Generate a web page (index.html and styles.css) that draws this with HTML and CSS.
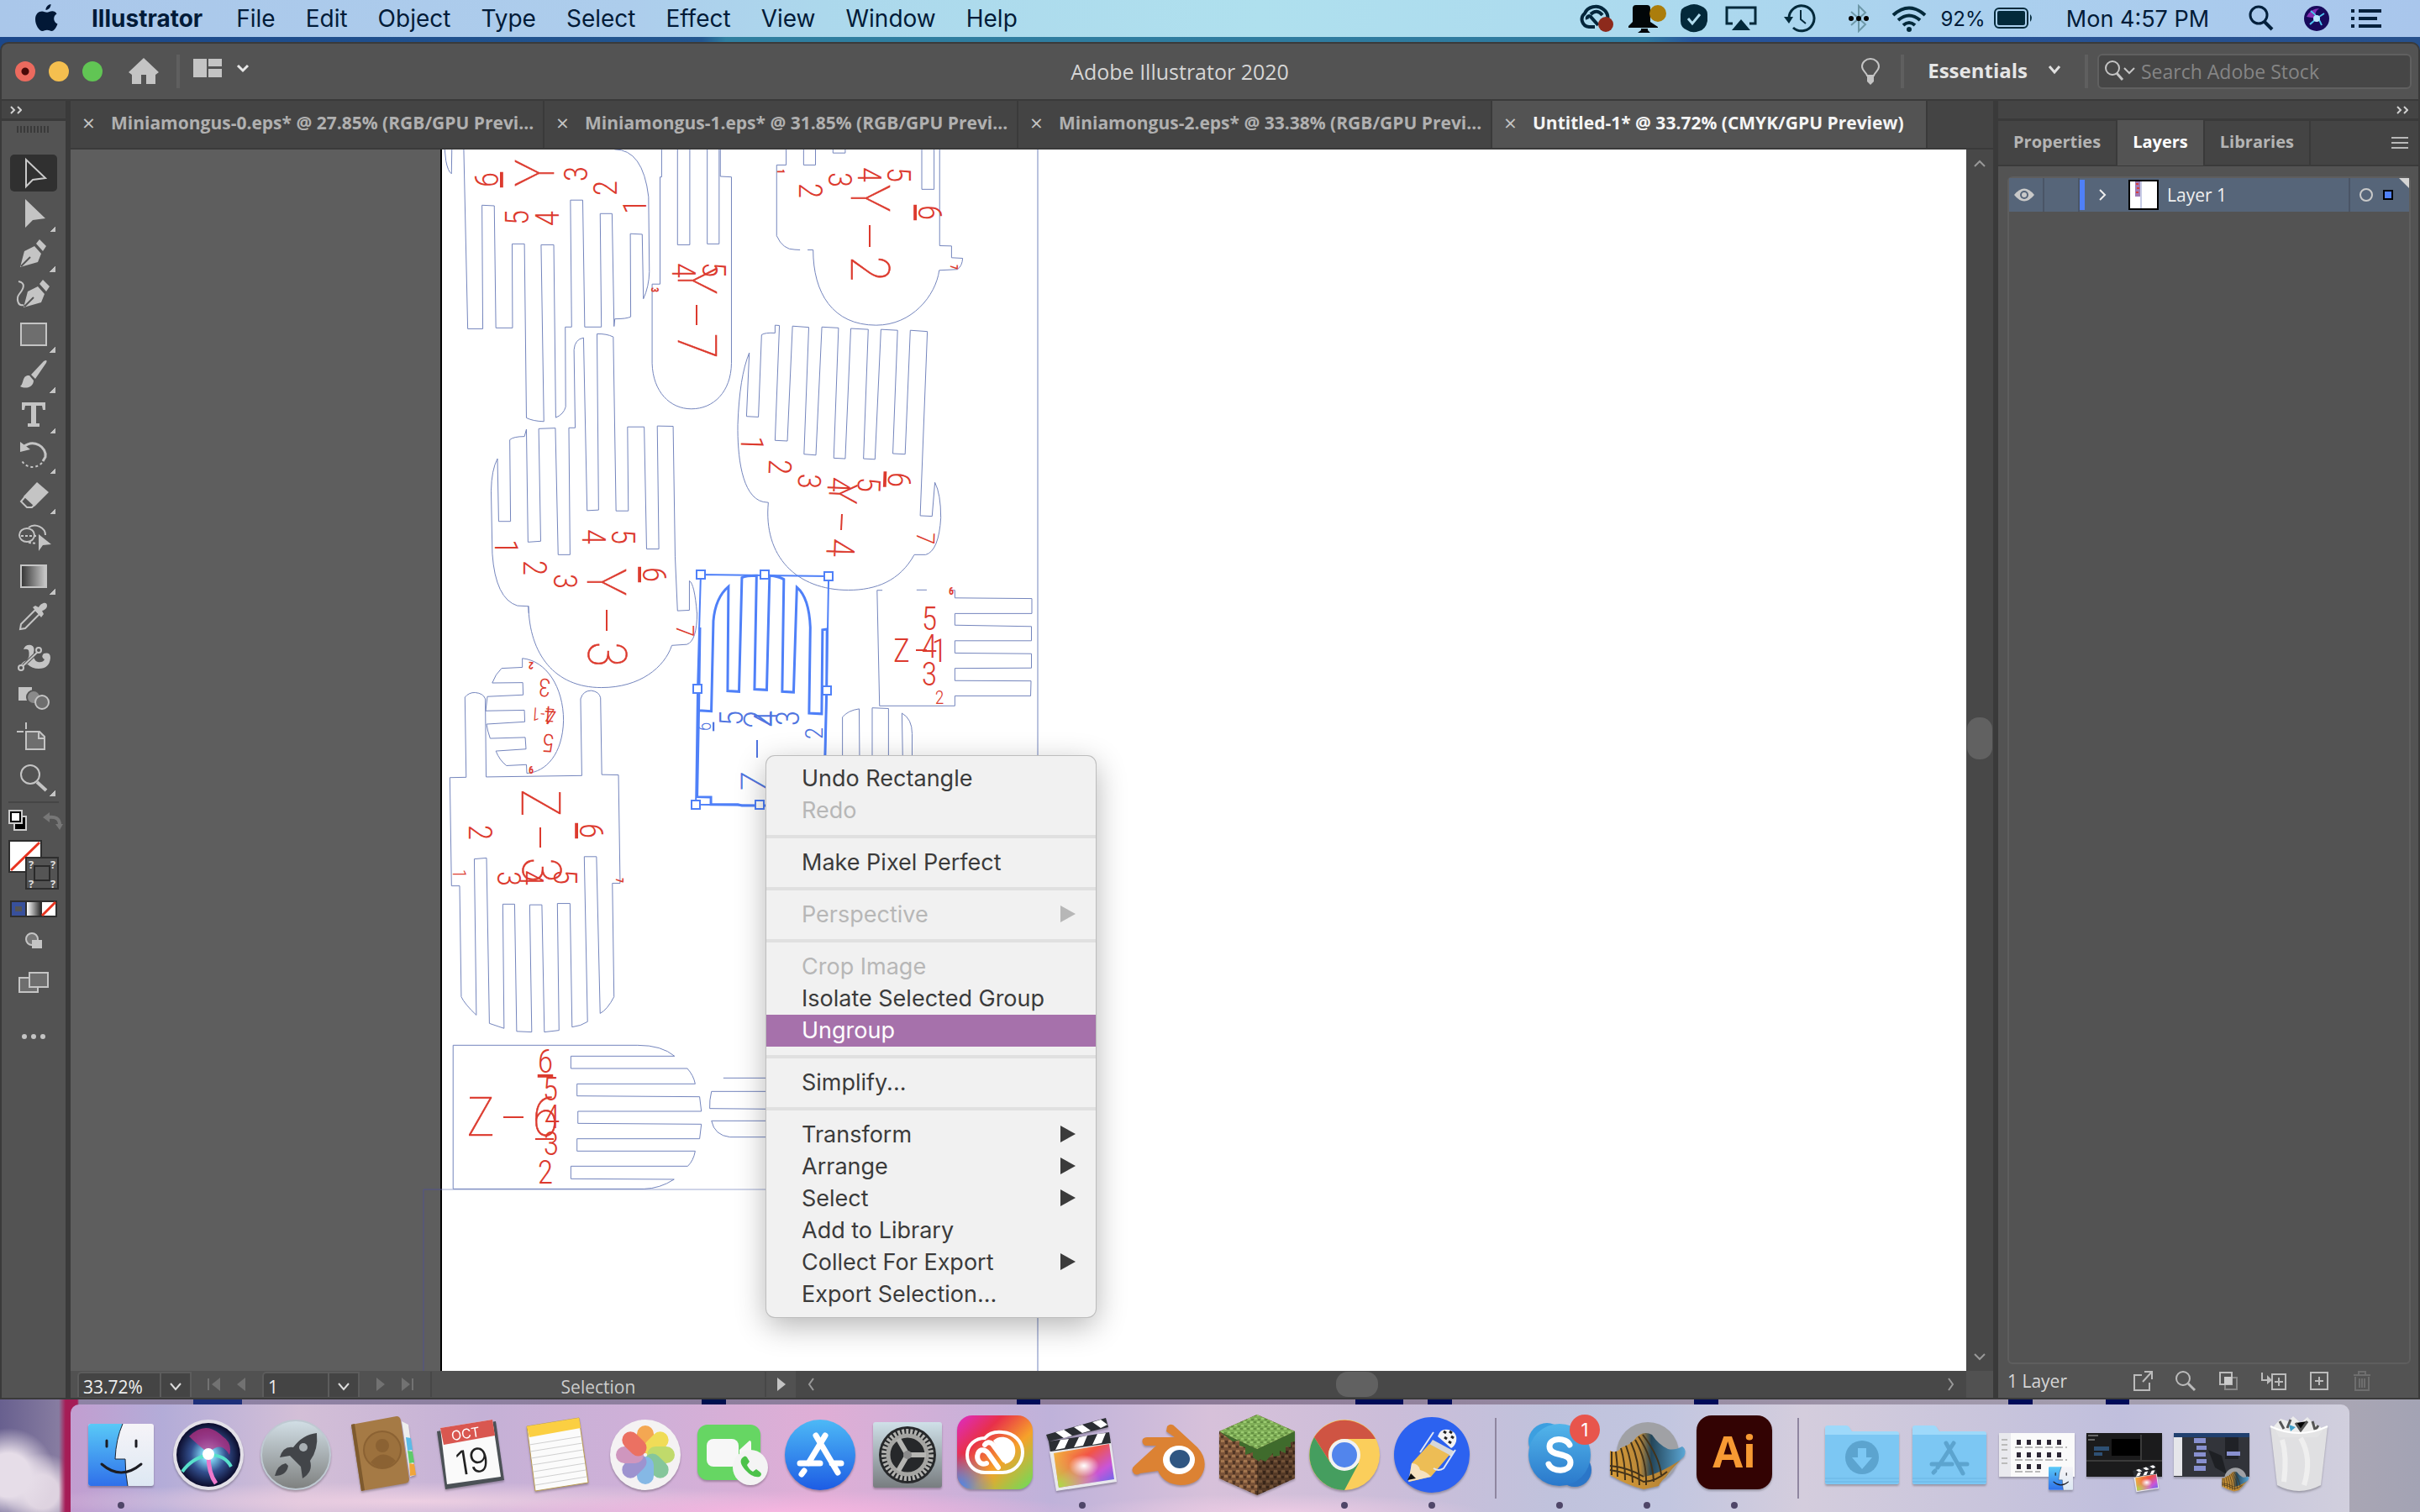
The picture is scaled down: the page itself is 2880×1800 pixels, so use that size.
FILE: index.html
```html
<!DOCTYPE html>
<html lang="en">
<head>
<meta charset="utf-8">
<title>Adobe Illustrator 2020</title>
<link rel="stylesheet" href="styles.css">
</head>
<body>
<header class="menubar">
  <nav class="menus">
    <svg class="apple" width="28" height="34" viewBox="0 0 28 34"><path d="M19.500 0c.3 3-2.500 7-6 7-.4-3 2.600-6.600 6-7zM26.500 11.500c-5 3-4 10 1 12-1.500 4-4 8.500-7 8.500-2 0-3-1.200-5.500-1.200S11.500 32 9.500 32C5.500 32 1 24.500 1 18S5 8.500 9 8.500c2.500 0 4 1.300 6 1.300 1.800 0 3.500-1.600 6.500-1.500 2 .1 3.800 1 5 3.200z" fill="#021836"/></svg>
    <button class="appname">Illustrator</button><button>File</button><button>Edit</button><button>Object</button><button>Type</button><button>Select</button><button>Effect</button><button>View</button><button>Window</button><button>Help</button>
  </nav>
  <div class="status">
    <svg width="44" height="34" viewBox="0 0 44 34"><g fill="none" stroke="#03263b" stroke-width="4"><path d="M20 27H13a9 9 0 0 1-5-16C11 3 23 0 30 6c6 4 7 12 3 17"/><path d="M24 25l-9-10c-2-2-5 0-4 3M15 12c5-5 10-4 14 1"/></g><circle cx="33" cy="24" r="9" fill="#8d2a1c"/></svg>
    <svg width="48" height="36" viewBox="0 0 48 36"><path d="M2 29V27l5-5V6q0-4 4-4h13q4 0 4 4v16l9 6v1zM17 30h8v2l3 3H13l4-3z" fill="#010608"/><circle cx="37" cy="12" r="10" fill="#ab7d0c"/></svg>
    <svg width="32" height="34" viewBox="0 0 32 34"><path d="M8 2q8-4 16 0 8 3 8 10v8q-2 10-10 12-8 3-14-1Q0 28 0 20v-8Q0 4 8 2z" fill="#03293a"/><path d="M9 17l5 6 9-11" fill="none" stroke="#b0dcee" stroke-width="3"/></svg>
    <svg width="38" height="32" viewBox="0 0 38 32"><path d="M9 22H2V3h34v19h-7" fill="none" stroke="#03293a" stroke-width="3"/><path d="M19 17l11 13H8z" fill="#03293a"/></svg>
    <svg width="40" height="34" viewBox="0 0 40 34"><path d="M7 17A15 15 0 1 1 12 28" fill="none" stroke="#03293a" stroke-width="3"/><path d="M1 15h11l-5 8z" fill="#03293a"/><path d="M21 7v11l6 5" fill="none" stroke="#03293a" stroke-width="2"/></svg>
    <svg width="26" height="34" viewBox="0 0 26 34"><path d="M4 9l17 15-8 8V2l8 8L4 25" fill="none" stroke="#6d98a8" stroke-width="2"/><circle cx="4" cy="17" r="3"/><circle cx="13" cy="17" r="3"/><circle cx="22" cy="17" r="3"/></svg>
    <svg width="42" height="32" viewBox="0 0 42 32"><g fill="none" stroke="#03293a" stroke-width="4"><path d="M2 12q19-17 38 0"/><path d="M8 18q13-11 26 0"/><path d="M14 24q7-6 14 0"/></g><circle cx="21" cy="29" r="3" fill="#03293a"/></svg>
    <span class="pct">92%</span>
    <svg width="48" height="28" viewBox="0 0 48 28"><rect x="2" y="2" width="39" height="23" rx="5" fill="none" stroke="#03293a" stroke-width="2"/><rect x="5" y="5" width="33" height="17" rx="2" fill="#03293a"/><path d="M44 9q4 4 0 9z" fill="#03293a"/></svg>
    <time>Mon 4:57 PM</time>
    <svg width="32" height="32" viewBox="0 0 32 32"><circle cx="13" cy="12" r="10" fill="none" stroke="#03203c" stroke-width="3"/><path d="M20 20l9 9" stroke="#03203c" stroke-width="4"/></svg>
    <svg width="32" height="32" viewBox="0 0 32 32"><circle cx="16" cy="16" r="15" fill="#180a5c"/><path d="M4 14Q9 4 19 4 12 9 16 16z" fill="#8531b5"/><path d="M9 7Q18 14 22 24M25 10Q16 15 8 23" stroke="#4cc4f0" stroke-width="2"/><circle cx="16" cy="16" r="4" fill="#b9e4ff"/></svg>
    <svg width="36" height="24" viewBox="0 0 36 24"><path d="M0 3h4m5 0h27M0 12h4m5 0h22M0 21h4m5 0h27" stroke="#03203c" stroke-width="4"/></svg>
  </div>
</header>

<main class="window">
  <div class="titlebar">
    <div class="tleft">
      <button class="light red" aria-label="Close"></button><button class="light yellow" aria-label="Minimize"></button><button class="light green" aria-label="Zoom"></button>
      <button class="home" aria-label="Home"><svg width="36" height="32" viewBox="0 0 36 32"><path d="M18 0l18 17-4 3v11H21V20h-6v11H4V20l-4-3z" fill="#c4c4c4"/></svg></button>
      <i class="vsep"></i>
      <button class="arr" aria-label="Arrange documents"><svg width="68" height="24" viewBox="0 0 68 24"><path d="M0 1h16v22H0zM18 1h16v9H18zM18 13h16v10H18z" fill="#c4c4c4"/><path d="M53 9l6 6 6-6" fill="none" stroke="#e8e8e8" stroke-width="3"/></svg></button>
    </div>
    <h1>Adobe Illustrator 2020</h1>
    <div class="tright">
      <svg width="24" height="34" viewBox="0 0 24 34"><path d="M8 22C7 18 2 16 2 11a10 9 0 0 1 20 0c0 5-5 7-6 11z" fill="none" stroke="#c4c4c4" stroke-width="2"/><path d="M8 23h8v6l-4 4-4-4z" fill="#c4c4c4"/></svg>
      <i class="vsep s1"></i>
      <button class="ess">Essentials<svg width="16" height="12" viewBox="0 0 16 12"><path d="M2 2l6 7 6-7" fill="none" stroke="#e0e0e0" stroke-width="3"/></svg></button>
      <i class="vsep s2"></i>
      <label class="search"><svg width="38" height="26" viewBox="0 0 38 26"><circle cx="10" cy="9" r="8" fill="none" stroke="#c4c4c4" stroke-width="2"/><path d="M15 15l7 8" stroke="#c4c4c4" stroke-width="3"/><path d="M24 9l6 6 6-6" fill="none" stroke="#c4c4c4" stroke-width="2"/></svg><input type="text" placeholder="Search Adobe Stock" aria-label="Search Adobe Stock"></label>
    </div>
  </div>
  <div class="work">
    <aside class="tools">
      <div class="phead"><svg width="14" height="10" viewBox="0 0 14 10"><path d="M1 1l4 4-4 4M9 1l4 4-4 4" fill="none" stroke="#d0d0d0" stroke-width="2"/></svg></div>
      <div class="grip"></div>
      <div class="toollist">
        <button class="on" aria-label="Selection"><svg viewBox="0 0 56 48"><path d="M19 8v32l8-8 15-2z" fill="none" stroke="#c9c9c9" stroke-width="2"/></svg></button>
        <button class="more" aria-label="Direct Selection"><svg viewBox="0 0 56 48"><path d="M18 7v34l9-9 15-2z" fill="#c4c4c4"/></svg></button>
        <button class="more" aria-label="Pen"><svg viewBox="0 0 56 48"><path d="M12 40l5-19 12-6 8 9-4 10zM31 12l4-5 8 8-4 6z" fill="#c4c4c4"/><path d="M13 39l11-11" stroke="#535353" stroke-width="2"/></svg></button>
        <button aria-label="Curvature"><svg viewBox="0 0 56 48"><path d="M16 40l5-19 12-6 8 9-4 10zM35 12l4-5 8 8-4 6z" fill="#c4c4c4"/><path d="M17 39l11-11" stroke="#535353" stroke-width="2"/><path d="M10 9c10 2 5 10 1 15s-2 15 5 13" fill="none" stroke="#c4c4c4" stroke-width="2"/></svg></button>
        <button class="more" aria-label="Rectangle"><svg viewBox="0 0 56 48"><path d="M13 11h30v26H13z" fill="#6e6e6e" stroke="#c4c4c4" stroke-width="2"/></svg></button>
        <button class="more" aria-label="Paintbrush"><svg viewBox="0 0 56 48"><path d="M12 38c5-4 2-14 11-13l5 6c0 7-8 11-16 7zM25 24L40 8q5-3 3 2L30 29z" fill="#c4c4c4"/></svg></button>
        <button class="more" aria-label="Type"><svg viewBox="0 0 56 48"><path d="M14 9h28v9h-3l-1-5h-7v21h4v4H21v-4h4V13h-7l-1 5h-3z" fill="#c4c4c4"/></svg></button>
        <button class="more" aria-label="Rotate"><svg viewBox="0 0 56 48"><path d="M16 14c12-10 28 0 26 12l-3 5" fill="none" stroke="#c4c4c4" stroke-width="3"/><path d="M12 8v12l12-3z" fill="#c4c4c4"/><path d="M38 33c-8 8-20 6-25-4" fill="none" stroke="#c4c4c4" stroke-width="2" stroke-dasharray="3 3"/></svg></button>
        <button class="more" aria-label="Eraser"><svg viewBox="0 0 56 48"><path d="M16 25L32 8l14 12-17 17z" fill="#c4c4c4"/><path d="M18 25l-5 6 7 7h6l4-4z" fill="none" stroke="#c4c4c4" stroke-width="2"/></svg></button>
        <button aria-label="Shape Builder"><svg viewBox="0 0 56 48"><ellipse cx="20" cy="23" rx="9" ry="8" fill="none" stroke="#c4c4c4" stroke-width="2"/><path d="M22 14c8-6 20 0 20 9" fill="none" stroke="#c4c4c4" stroke-width="2"/><path d="M13 24h20M22 32l10 1" stroke="#c4c4c4" stroke-width="2" stroke-dasharray="3 2"/><path d="M34 22v20l5-7 10-1z" fill="#c4c4c4"/></svg></button>
        <button class="more" aria-label="Gradient"><svg viewBox="0 0 56 48"><defs><linearGradient id="gr"><stop stop-color="#333"/><stop offset="1" stop-color="#ccc"/></linearGradient></defs><path d="M13 11h30v26H13z" fill="url(#gr)" stroke="#c4c4c4" stroke-width="2"/></svg></button>
        <button aria-label="Eyedropper"><svg viewBox="0 0 56 48"><path d="M30 16l5 5-17 17-6 1 1-6z" fill="none" stroke="#c4c4c4" stroke-width="2"/><path d="M27 13l3-2 4 2c2-5 10-8 10-2 0 4-5 6-6 6l2 4-3 4z" fill="#c4c4c4"/></svg></button>
        <button aria-label="Puppet Warp"><svg viewBox="0 0 56 48"><path d="M16 15q2-6 9-5 5 2 3 9-1 9 5 11 6 1 8-3-5-3-1-7 8-2 8 5-1 13-14 13-8 0-13-5-6 2-8 5-1-8 7-10 4-5 2-12-2-2-6-1z" fill="#c4c4c4"/><path d="M13 37l21-20" stroke="#535353" stroke-width="4"/><path d="M13 37l21-20" stroke="#c4c4c4" stroke-width="2"/><circle cx="13" cy="37" r="3" fill="#535353" stroke="#c4c4c4" stroke-width="2"/><circle cx="34" cy="16" r="3" fill="#535353" stroke="#c4c4c4" stroke-width="2"/></svg></button>
        <button aria-label="Blend"><svg viewBox="0 0 56 48"><path d="M10 12h16v16H10z" fill="#c4c4c4"/><ellipse cx="28" cy="24" rx="8" ry="8" fill="#8a8a8a" stroke="#535353" stroke-width="2"/><circle cx="38" cy="30" r="8" fill="#6e6e6e" stroke="#c4c4c4" stroke-width="2"/></svg></button>
        <button aria-label="Artboard"><svg viewBox="0 0 56 48"><path d="M19 17h16l6 6v15H19z" fill="#6e6e6e" stroke="#c4c4c4" stroke-width="2"/><path d="M34 16v9h8M8 17h8M19 6v8" fill="none" stroke="#c4c4c4" stroke-width="2"/></svg></button>
        <button class="more" aria-label="Zoom"><svg viewBox="0 0 56 48"><circle cx="24" cy="20" r="11" fill="none" stroke="#c4c4c4" stroke-width="2"/><path d="M32 29l11 10" stroke="#c4c4c4" stroke-width="4"/></svg></button>
      </div>
      <svg class="swatches" width="76" height="300" viewBox="2 952 76 300">
        <path d="M10 955h60" stroke="#464646" stroke-width="2"/>
        <path d="M17 972h14v16H17z" fill="#000" stroke="#ccc" stroke-width="2"/><path d="M11 965h15v15H11z" fill="#fff" stroke="#ccc" stroke-width="2"/><path d="M13 967h11v11H13z" fill="#fff" stroke="#000" stroke-width="2"/>
        <path d="M57 973q14-2 14 9" fill="none" stroke="#777" stroke-width="4"/><path d="M51 973l8-6v12zM66 981h9l-4 7z" fill="#777"/>
        <path d="M11 1001h38v37H11z" fill="#fff" stroke="#2e2e2e" stroke-width="2"/><path d="M13 1036l34-33" stroke="#e8331f" stroke-width="3"/>
        <path d="M31 1021h38v37H31z" fill="#535353" stroke="#2e2e2e" stroke-width="2"/><path d="M41 1031h18v17H41z" fill="#555" stroke="#2a2a2a" stroke-width="2"/>
        <g class="q"><text x="34" y="1034">?</text><text x="60" y="1034">?</text><text x="34" y="1057">?</text><text x="60" y="1057">?</text></g>
        <path d="M12 1072h56v20H12z" fill="#2e2e2e"/><path d="M14 1074h16v16H14z" fill="#38509b"/><path d="M18 1079h8v6h-8z" fill="#555"/><path d="M32 1074h16v16H32z" fill="url(#g2)"/><path d="M50 1074h16v16H50z" fill="#fff"/><path d="M50 1090l16-16" stroke="#e8331f" stroke-width="3"/>
        <defs><linearGradient id="g2"><stop stop-color="#fff"/><stop offset="1" stop-color="#333"/></linearGradient></defs>
        <circle cx="38" cy="1118" r="7" fill="#777" stroke="#c4c4c4" stroke-width="2"/><path d="M38 1119h12v10H38z" fill="#c4c4c4"/>
        <path d="M23 1164h22v17H23z" fill="#6e6e6e" stroke="#c4c4c4" stroke-width="2"/><path d="M35 1158h22v17H35z" fill="#6e6e6e" stroke="#c4c4c4" stroke-width="2"/>
        <circle cx="29" cy="1234" r="3" fill="#c4c4c4"/><circle cx="40" cy="1234" r="3" fill="#c4c4c4"/><circle cx="51" cy="1234" r="3" fill="#c4c4c4"/>
      </svg>
    </aside>

    <section class="docs">
      <div class="tabs">
        <button class="tab"><b>×</b>Miniamongus-0.eps* @ 27.85% (RGB/GPU Previ...</button>
        <button class="tab"><b>×</b>Miniamongus-1.eps* @ 31.85% (RGB/GPU Previ...</button>
        <button class="tab"><b>×</b>Miniamongus-2.eps* @ 33.38% (RGB/GPU Previ...</button>
        <button class="tab active"><b>×</b>Untitled-1* @ 33.72% (CMYK/GPU Preview)</button>
      </div>
      <div class="view">
        <div class="canvas">
          <svg class="art" viewBox="84 178 2256 1454" preserveAspectRatio="xMinYMin slice">
            <rect x="84" y="178" width="441" height="1454" fill="#5e5e5e"/>
            <rect x="526" y="178" width="1814" height="1454" fill="#fff"/>
            <rect x="524" y="178" width="2" height="1454" fill="#000"/>
            <path d="M504 1632V1416h22" fill="none" stroke="#50528a"/>
            <g class="cut">
              <path d="M1235 178V1632"/><path d="M526 1416H1235" opacity=".7"/>
              <g transform="translate(500 170) scale(.47194 .35714)">
                <path d="M62 22L65 60Q70 95 79 103L80 22M110 22L120 620H158L156 208L187 210L191 617H233L232 337H263L268 917Q285 928 312 929L305 340H337L342 916Q362 905 367 880L366 614H382L379 191H410L415 614H457L454 236H484L489 612L491 587Q520 587 531 580L530 303L560 305L563 520Q577 480 578 430L576 180Q562 22 490 22"/>
                <path d="M609 22V114H605V471H585V735C587 830 630 887 684 887C740 887 784 830 785 735V114L757 112V22M649 22V340H680V22M724 22V337H754V22"/>
                <path d="M923 22V74H899V310Q915 357 945 356L958 357M977 357H991C991 500 1040 608 1150 608C1240 608 1300 510 1309 425L1355 422Q1367 410 1368 385L1340 383V344L1310 343V22M967 22V74H997V22M1041 22V34H1072V22M1265 22V155H1296V22"/>
                <path d="M274 1568L273 1545L245 1543Q190 1520 182 1370L179 1160Q180 1090 195 1053L198 1262H228L226 990Q235 979 263 979L268 955L272 1331L304 1328L299 953L341 951L348 1373H378L375 950H391L388 690Q390 655 412 650L421 1226L450 1224L446 637Q470 636 487 647L494 1227H525L523 947H565L571 1354H602L598 944L638 945L643 1380L649 1560L679 1558V1460Q692 1470 698 1568"/>
                <path d="M878 1199L865 1197C810 1180 800 1040 801 940Q805 780 830 700L823 912L853 914L861 640Q870 632 895 634V608L906 609L895 992L926 994L939 611L980 615L968 1038L998 1041L1013 614L1055 617L1043 1051L1072 1053L1086 619L1130 622L1118 1053L1147 1055L1162 622L1204 625L1192 1036L1223 1038L1236 625L1279 629L1261 1243L1291 1245L1298 1132Q1313 1170 1313 1250Q1308 1360 1275 1373H1246C1210 1460 1150 1491 1080 1491C950 1491 865 1380 878 1199"/>
              </g>
              <g transform="translate(500 660) scale(.48468 .39541)">
                <path d="M680 175Q680 260 655 271L618 274C600 340 540 401 445 401C330 401 268 300 266 155"/>
                <path d="M1135 108H1122L1128 456H1313V426H1499L1500 381L1313 380V343L1501 342V299L1313 297V260H1501V217L1313 213V178H1502V133L1313 131V108H1303M1219 107H1244"/>
                <path d="M1037 620V490Q1050 470 1078 465L1079 620M1110 620V462L1150 464V620M1185 620L1183 478Q1208 495 1208 540V620"/>
                <path d="M251 340V313C310 320 352 400 352 500C350 600 310 655 262 659L261 633L212 636Q195 620 186 592L260 586L258 551L172 554Q165 530 163 511L257 504L256 469L161 471L165 428L253 423L252 386L177 387Q185 360 200 343Z"/>
                <path d="M113 671L110 430Q120 415 135 416Q155 418 160 435L162 670L397 666L394 435Q400 410 420 410Q440 413 443 432L446 663L487 664L491 990H472L476 1332Q460 1370 442 1382L433 910H403L411 1407Q395 1420 373 1423L368 1051H337L341 1433L305 1438L299 1055H269L274 1438L237 1436L232 1053H203L206 1427L170 1412L163 914L133 917L138 1387Q110 1355 101 1332L97 998H77L73 672Z"/>
              </g>
              <g transform="translate(500 1200) scale(.52296 .33333)">
                <path d="M75 133H495Q550 133 579 172H343V216H608Q622 240 626 271H357V314L636 317L640 369H359V412L640 415L636 467H357V511H626Q622 545 609 565H343V610L578 612Q545 645 510 646H75Z"/>
                <path d="M690 250H800M800 298H663Q658 330 659 359L800 361M800 403H663Q670 455 705 461H800"/>
              </g>
            </g>
            <g class="lbl">
              <text class="u" transform="translate(583 214) rotate(-90)" dy="10">6</text><text class="big" transform="translate(637 206) rotate(-90)" dy="22">Y</text><text transform="translate(686 207) rotate(-90)" dy="13">3</text><text transform="translate(721 224) rotate(-90)" dy="13">2</text><text transform="translate(756 246) rotate(-90)" dy="13">1</text><text transform="translate(616 259) rotate(-90)" dy="13">5</text><text transform="translate(652 260) rotate(-90)" dy="13">4</text>

              <text transform="translate(849 321) rotate(90)" dy="13">5</text><text transform="translate(813 322) rotate(90)" dy="13">4</text><text class="big" transform="translate(829 334) rotate(90)" dy="22">Y</text><text class="big" transform="translate(829 412) rotate(90)" dy="22">7</text><path d="M829 363v24"/><text class="tiny" transform="translate(778 345) rotate(90)" dy="3">3</text>

              <text class="tiny" transform="translate(928 204) rotate(90)" dy="3">1</text><text transform="translate(964 227) rotate(90)" dy="13">2</text><text transform="translate(999 214) rotate(90)" dy="13">3</text><text transform="translate(1034 208) rotate(90)" dy="13">4</text><text transform="translate(1069 208) rotate(90)" dy="13">5</text><text class="u" transform="translate(1103 253) rotate(90)" dy="10">6</text><text class="big" transform="translate(1035 236) rotate(90)" dy="22">Y</text><path d="M1035 268v26"/><text class="big" transform="translate(1035 320) rotate(90)" dy="22">2</text><text class="tiny" transform="translate(1134 318) rotate(90)" dy="3">7</text>

              <text transform="translate(895 528) rotate(92)" dy="13">1</text><text transform="translate(928 556) rotate(92)" dy="13">2</text><text transform="translate(963 573) rotate(92)" dy="13">3</text><text transform="translate(998 577) rotate(92)" dy="13">4</text><text transform="translate(1034 577) rotate(92)" dy="13">5</text><text class="u" transform="translate(1067 571) rotate(92)" dy="10">6</text><text class="mid" transform="translate(1003 588) rotate(92)" dy="16">Y</text><path d="M1002 612l-1 19"/><text class="mid" transform="translate(1000 652) rotate(92)" dy="16">4</text><text transform="translate(1102 641) rotate(92)" dy="11" class="sm">7</text>

              <text transform="translate(602 651) rotate(90)" dy="13">1</text><text transform="translate(636 676) rotate(90)" dy="13">2</text><text transform="translate(672 692) rotate(90)" dy="13">3</text><text transform="translate(706 639) rotate(90)" dy="13">4</text><text transform="translate(741 639) rotate(90)" dy="13">5</text><text class="u" transform="translate(775 684) rotate(90)" dy="10">6</text><text class="big" transform="translate(721 693) rotate(90)" dy="22">Y</text><path d="M722 726v25"/><text class="big" transform="translate(722 779) rotate(90)" dy="22">3</text><text class="sm" transform="translate(814 751) rotate(90)" dy="9">7</text>

              <text x="1106" y="750">5</text><text x="1073" y="788">Z</text><path d="M1090 774h13"/><text x="1106" y="783">4</text><text x="1118" y="788">1</text><text x="1106" y="816">3</text><text class="xs" x="1118" y="838">2</text><text class="tiny" x="1132" y="708">6</text>

              <text class="tiny" transform="translate(632 792) rotate(184)" dy="4">2</text><text class="sm" transform="translate(648 818) rotate(184)" dy="10">3</text><text class="sm" transform="translate(655 851) rotate(184)" dy="10">4</text><text class="xs" transform="translate(646 850) rotate(184)" dy="7">Z-1</text><text class="sm" transform="translate(653 884) rotate(184)" dy="10">5</text><text class="tiny" x="632" y="921">6</text>

              <text class="big" transform="translate(643 956) rotate(90)" dy="22">Z</text><path d="M643 985v24"/><text class="big" transform="translate(644 1036) rotate(90)" dy="22">3</text><text transform="translate(571 991) rotate(90)" dy="13">2</text><text class="u" transform="translate(700 989) rotate(90)" dy="10">6</text><text class="xs" transform="translate(546 1040) rotate(90)" dy="7">1</text><text transform="translate(605 1046) rotate(90)" dy="13">3</text><text transform="translate(632 1045) rotate(90)" dy="13">4</text><text transform="translate(672 1044) rotate(90)" dy="13">5</text><text class="tiny" transform="translate(736 1048) rotate(90)" dy="3">7</text>

              <text class="u" x="649" y="1277">6</text><text x="655" y="1310">5</text><text class="big" x="572" y="1352">Z</text><path d="M599 1330h24"/><text class="big" x="649" y="1352">6</text><path d="M637 1356h22"/><text x="657" y="1343">4</text><text x="656" y="1375">3</text><text x="649" y="1409">2</text>
            </g>
            <g class="lbl blue">
              <text class="xs u" transform="translate(840 865) rotate(-90)" dy="6">6</text><text transform="translate(872 855) rotate(-90)" dy="12">5</text><text class="mid" transform="translate(902 856) rotate(-90)" dy="16">2</text><text transform="translate(912 856) rotate(-90)" dy="13">4</text><text transform="translate(938 855) rotate(-90)" dy="13">3</text><text class="sm" transform="translate(970 873) rotate(-90)" dy="9">2</text><path d="M901 881v21"/><text class="mid" transform="translate(899 930) rotate(-90)" dy="16">Z</text>
            </g>
            <g transform="translate(500 660) scale(.48468 .39541)" class="sel">
              <path class="thin" d="M850 756L677 753L681 405L689 61L1003 66L998 410L994 620"/>
              <path d="M687 220L684 470L715 472L720 200Q725 130 757 97L755 411L783 413L790 70Q800 64 826 64L821 406L851 408L858 64Q880 66 893 75L889 413L917 415L925 99Q955 130 958 220L955 478L986 480L988 227L999 225L998 410L994 620M684 470L680 730L714 731V753L780 753L790 756H850"/>
            </g>
            <g class="handles"><path d="M829 679h10v10h-10zM905 679h10v10h-10zM981 681h10v10h-10zM825 815h10v10h-10zM979 817h10v10h-10zM823 953h10v10h-10zM899 953h10v10h-10z"/></g>
          </svg>
          <div class="context" role="menu">
            <button>Undo Rectangle</button><button disabled>Redo</button><hr>
            <button>Make Pixel Perfect</button><hr>
            <button class="sub" disabled>Perspective</button><hr>
            <button disabled>Crop Image</button><button>Isolate Selected Group</button><button class="hl">Ungroup</button><hr>
            <button>Simplify...</button><hr>
            <button class="sub">Transform</button><button class="sub">Arrange</button><button class="sub">Select</button><button>Add to Library</button><button class="sub">Collect For Export</button><button>Export Selection...</button>
          </div>
        </div>
        <div class="vscroll"><svg width="16" height="10" viewBox="0 0 16 10"><path d="M2 8l6-6 6 6" fill="none" stroke="#999" stroke-width="2"/></svg><i></i><svg width="16" height="10" viewBox="0 0 16 10"><path d="M2 2l6 6 6-6" fill="none" stroke="#999" stroke-width="2"/></svg></div>
      </div>
      <div class="statusbar">
        <input class="zoomval" value="33.72%" aria-label="Zoom level"><button class="dd" aria-label="Zoom presets"><svg width="16" height="12" viewBox="0 0 16 12"><path d="M2 2l6 7 6-7" fill="none" stroke="#ddd" stroke-width="2"/></svg></button>
        <svg class="nav" width="84" height="16" viewBox="0 0 84 16"><path d="M19 1h2v14h-2zM34 0v16l-10-8zM64 0v16l-10-8z" fill="#727272"/></svg>
        <input class="page" value="1" aria-label="Artboard"><button class="dd" aria-label="Artboards"><svg width="16" height="12" viewBox="0 0 16 12"><path d="M2 2l6 7 6-7" fill="none" stroke="#ddd" stroke-width="2"/></svg></button>
        <svg class="nav" width="84" height="16" viewBox="0 0 84 16"><path d="M20 0v16l10-8zM50 0v16l10-8zM62 1h2v14h-2z" fill="#727272"/></svg>
        <span class="cur">Selection</span>
        <button class="play" aria-label="Status options"><svg width="12" height="16" viewBox="0 0 12 16"><path d="M1 0l10 8-10 8z" fill="#c4c4c4"/></svg></button>
        <div class="hscroll"><svg width="8" height="16" viewBox="0 0 8 16"><path d="M7 1L2 8l5 7" fill="none" stroke="#999" stroke-width="2"/></svg><i></i><svg width="8" height="16" viewBox="0 0 8 16"><path d="M1 1l5 7-5 7" fill="none" stroke="#999" stroke-width="2"/></svg></div>
        <div class="corner"></div>
      </div>
    </section>

    <aside class="panel">
      <div class="phead right"><svg width="14" height="10" viewBox="0 0 14 10"><path d="M1 1l4 4-4 4M9 1l4 4-4 4" fill="none" stroke="#d0d0d0" stroke-width="2"/></svg></div>
      <div class="ptabs"><button>Properties</button><button class="active">Layers</button><button>Libraries</button><span></span><svg width="20" height="16" viewBox="0 0 20 16"><path d="M0 2h20M0 8h20M0 14h20" stroke="#b8b8b8" stroke-width="2"/></svg></div>
      <div class="pbody">
        <div class="layers">
          <div class="layer">
            <svg class="eye" width="24" height="16" viewBox="0 0 24 16"><path d="M0 8Q12-7 24 8 12 23 0 8z" fill="#c9c9c9"/><circle cx="12" cy="8" r="5" fill="#566579"/><circle cx="12" cy="8" r="3" fill="#c9c9c9"/></svg>
            <i class="lockcell"></i><i class="bar"></i>
            <svg class="tw" width="10" height="16" viewBox="0 0 10 16"><path d="M2 2l6 6-6 6" fill="none" stroke="#eee" stroke-width="2"/></svg>
            <svg class="thumb" width="36" height="36" viewBox="0 0 36 36"><path d="M1 1h34v34H1z" fill="#fff" stroke="#000" stroke-width="2"/><path d="M8 2h6v18H8z" fill="#a07ab5"/><path d="M9 5h3m-2 5h3m-4 5h3" stroke="#d8403c" stroke-width="2"/><path d="M15 2v32" stroke="#8d98cc"/></svg>
            <span class="lname">Layer 1</span>
            <svg class="tgt" width="72" height="40" viewBox="0 0 72 40"><path d="M1 0v40" stroke="#4a5566" stroke-width="2"/><circle cx="21" cy="20" r="7" fill="none" stroke="#c9c9c9" stroke-width="2"/><path d="M42 15h10v10H42z" fill="#4f80f8" stroke="#000" stroke-width="2"/><path d="M60 0h12v12z" fill="#d5d5d5"/></svg>
          </div>
        </div>
        <div class="pfoot"><span>1 Layer</span>
          <svg width="26" height="26" viewBox="0 0 26 26"><path d="M12 6H3v18h18v-9M13 14L23 3M15 2h9v9" fill="none" stroke="#bbb" stroke-width="2"/></svg>
          <svg width="26" height="26" viewBox="0 0 26 26"><circle cx="10" cy="10" r="8" fill="none" stroke="#bbb" stroke-width="2"/><path d="M16 16l8 8" stroke="#bbb" stroke-width="3"/></svg>
          <svg width="26" height="26" viewBox="0 0 26 26"><path d="M9 9h14v14H9z" fill="none" stroke="#888" stroke-width="2"/><path d="M3 3h14v14H3z" fill="none" stroke="#bbb" stroke-width="2"/><path d="M8 8h9v9H8z" fill="#ccc"/></svg>
          <svg width="32" height="26" viewBox="0 0 32 26"><path d="M14 5h16v18H14zM22 9v10M17 14h10M2 3v9h6" fill="none" stroke="#bbb" stroke-width="2"/><path d="M8 6l6 6-6 5z" fill="#bbb"/></svg>
          <svg width="26" height="26" viewBox="0 0 26 26"><path d="M3 3h20v20H3zM13 8v10M8 13h10" fill="none" stroke="#bbb" stroke-width="2"/></svg>
          <svg width="26" height="26" viewBox="0 0 26 26"><path d="M3 6h20M9 5V2h8v3M5 8v16h16V8M10 10v11M13 10v11M16 10v11" fill="none" stroke="#6e6e6e" stroke-width="2"/></svg>
        </div>
      </div>
    </aside>
  </div>
</main>

<footer class="desk">
<div class="dock">
  <a href="#finder" class="run" aria-label="Finder"><svg viewBox="0 0 96 96"><defs><linearGradient id="fb" x2="0" y2="1"><stop stop-color="#59c9f7"/><stop offset="1" stop-color="#2f70ea"/></linearGradient><linearGradient id="fw" x2="0" y2="1"><stop stop-color="#f6f4f8"/><stop offset="1" stop-color="#dde8f3"/></linearGradient><symbol id="finderface" viewBox="0 0 78 74"><path d="M3 0h72q3 0 3 3v68q0 3-3 3H3q-3 0-3-3V3q0-3 3-3z" fill="url(#fw)"/><path d="M3 0h38q-8 18-9 42h12q0 16 3 32H3q-3 0-3-3V3q0-3 3-3z" fill="url(#fb)"/><path d="M41 0q-8 18-9 42h12q0 16 3 32" fill="none" stroke="#1b2433" stroke-width="1"/><path d="M22 20v7M57 20v7M16 48q23 20 47 0" fill="none" stroke="#1c1c22" stroke-width="3" stroke-linecap="round"/></symbol></defs><use href="#finderface" x="9" y="11" width="78" height="74"/></svg></a>
  <a href="#siri" aria-label="Siri"><svg viewBox="0 0 96 96"><defs><radialGradient id="si"><stop stop-color="#fff"/><stop offset=".2" stop-color="#7ccff0"/><stop offset=".55" stop-color="#33508f"/><stop offset="1" stop-color="#0b0b2b"/></radialGradient></defs><circle cx="48" cy="48" r="42" fill="#e3e0e8"/><circle cx="48" cy="48" r="38" fill="url(#si)"/><path d="M25 26q20-20 40 0 12 8 8 22-10-18-25-2-15-12-23-20z" fill="#c02f85" opacity=".7"/><path d="M48 48q-20 4-31 20M48 48q20 0 27 14" stroke="#58e0cb" stroke-width="4" fill="none"/><path d="M48 48q0 22 9 34" stroke="#ee79cc" stroke-width="5" fill="none"/><circle cx="48" cy="47" r="7" fill="#fff"/></svg></a>
  <a href="#launchpad" aria-label="Launchpad"><svg viewBox="0 0 96 96"><defs><linearGradient id="lp" x2="0" y2="1"><stop stop-color="#d2dfe6"/><stop offset="1" stop-color="#7e807f"/></linearGradient></defs><circle cx="48" cy="48" r="41" fill="url(#lp)" stroke="#bfc9d2" stroke-width="2"/><path d="M73 22q-17 2-28 17-12-2-16 12l12-2 13 13 2 14q13-8 9-21Q75 42 73 22z" fill="#424549"/><circle cx="57" cy="39" r="5" fill="#a9b0b4"/><path d="M36 58q-10 2-13 15 14 0 16-12z" fill="#424549"/></svg></a>
  <a href="#contacts" aria-label="Contacts"><svg viewBox="0 0 96 96"><path d="M70 8l8 4 8 60-6 2z" fill="#eee"/><path d="M75 27l6 1 2 14-6 1z" fill="#5bbbe6"/><path d="M77 43l6 1 2 13-6 1z" fill="#5ecb6a"/><path d="M79 58l6 1 2 13-7 1z" fill="#f0a53a"/><path d="M10 12L64 2q4 0 5 5l10 70q0 4-5 5L22 91z" fill="#a57a45"/><path d="M10 12L22 91l4-1L14 11z" fill="#7e5a2e"/><circle cx="47" cy="42" r="22" fill="#9c713d" stroke="#8b6233" stroke-width="2"/><circle cx="47" cy="37" r="8" fill="#8b6233"/><path d="M33 57q14-18 30-2-14 16-30 2z" fill="#8b6233"/></svg></a>
  <a href="#calendar" aria-label="Calendar"><svg viewBox="0 0 96 96"><path d="M8 20L78 8l10 70-70 11z" fill="#4b5156"/><path d="M12 16L74 6l10 68-64 9z" fill="#fafafa"/><path d="M12 16L74 6l3 19-61 11z" fill="#d95750"/><g transform="rotate(-9 48 48)"><text class="oct" x="46" y="28">OCT</text><text class="day" x="49" y="70">19</text></g></svg></a>
  <a href="#notes" aria-label="Notes"><svg viewBox="0 0 96 96"><path d="M11 14L73 4l11 77-63 10z" fill="#fbfbfb" stroke="#b99b4f"/><path d="M11 14L73 4l2 12-61 11z" fill="#fbcf42"/><path d="M14 36l62-10m-61 18l62-10m-61 18l62-10m-61 18l62-10m-60 18l61-10m-60 18l61-10m-60 18l61-10" stroke="#d0d0d0"/></svg></a>
  <a href="#photos" aria-label="Photos"><svg viewBox="0 0 96 96"><circle cx="48" cy="48" r="42" fill="#f4f2f3"/><g opacity=".85"><rect x="38" y="13" width="20" height="33" rx="10" fill="#f59a36"/><rect x="38" y="13" width="20" height="33" rx="10" fill="#f0d93c" transform="rotate(45 48 48)"/><rect x="38" y="13" width="20" height="33" rx="10" fill="#b8d654" transform="rotate(90 48 48)"/><rect x="38" y="13" width="20" height="33" rx="10" fill="#72bf8c" transform="rotate(135 48 48)"/><rect x="38" y="13" width="20" height="33" rx="10" fill="#72aee3" transform="rotate(180 48 48)"/><rect x="38" y="13" width="20" height="33" rx="10" fill="#8f83c9" transform="rotate(225 48 48)"/><rect x="38" y="13" width="20" height="33" rx="10" fill="#c987b5" transform="rotate(270 48 48)"/><rect x="38" y="13" width="20" height="33" rx="10" fill="#ea5b49" transform="rotate(315 48 48)"/></g></svg></a>
  <a href="#facetime" aria-label="FaceTime"><svg viewBox="0 0 96 96"><rect x="6" y="12" width="75" height="66" rx="12" fill="#66d663"/><rect x="17" y="29" width="38" height="33" rx="8" fill="#f7f7f7"/><path d="M56 42l12-11q2 0 2 3v25l-14-10z" fill="#f7f7f7"/><circle cx="69" cy="63" r="21" fill="#f4f4f4"/><path d="M60 51q-6 5 3 15t17 8q4-3 0-6l-4-3-4 3q-5-3-7-8l3-4-3-5q-2-3-5 0z" fill="#4cc24a"/></svg></a>
  <a href="#appstore" aria-label="App Store"><svg viewBox="0 0 96 96"><defs><linearGradient id="as" x2="0" y2="1"><stop stop-color="#4db9f6"/><stop offset="1" stop-color="#1d5ce4"/></linearGradient></defs><circle cx="48" cy="48" r="42" fill="url(#as)"/><g stroke="#fff" stroke-width="7" stroke-linecap="round"><path d="M54 25L34 58M43 25l26 44M24 58h24M62 58h11M29 67l-3 4"/></g></svg></a>
  <a href="#prefs" aria-label="System Preferences"><svg viewBox="0 0 96 96"><defs><linearGradient id="sp" x2="0" y2="1"><stop stop-color="#cfe0e8"/><stop offset="1" stop-color="#787d80"/></linearGradient></defs><rect x="7" y="9" width="82" height="78" rx="3" fill="url(#sp)"/><circle cx="48" cy="48" r="34" fill="#26282a"/><circle cx="48" cy="48" r="28" fill="none" stroke="#b3b3b0" stroke-width="6" stroke-dasharray="3 2"/><circle cx="48" cy="48" r="23" fill="none" stroke="#a5a5a2" stroke-width="5"/><path d="M48 48h22M48 48L37 29M48 48L37 67" stroke="#b5b5b2" stroke-width="6"/><circle cx="48" cy="48" r="5" fill="#8b8b8b"/></svg></a>
  <a href="#cc" aria-label="Creative Cloud"><svg viewBox="0 0 96 96"><defs><linearGradient id="ca" x2="1" y2="1"><stop stop-color="#dd2bc8"/><stop offset=".3" stop-color="#e8304a"/><stop offset=".6" stop-color="#f6a12a"/><stop offset="1" stop-color="#67df5c"/></linearGradient><radialGradient id="cb" cx="0" cy="1"><stop stop-color="#3a86ff"/><stop offset="1" stop-color="#3a86ff" stop-opacity="0"/></radialGradient></defs><rect x="3" y="1" width="90" height="88" rx="18" fill="url(#ca)"/><rect x="3" y="1" width="90" height="88" rx="18" fill="url(#cb)"/><path d="M57 69H36C24 69 15 60 15 48S25 28 36 28C41 22 48 20 57 21 71 22 81 32 81 45S71 69 57 69z" fill="none" stroke="#fff" stroke-width="4"/><path d="M52 63L40 46c-4-5-10-5-12 0-3 8 3 15 10 12" fill="none" stroke="#fff" stroke-width="6" stroke-linecap="round"/><path d="M36 36c2-3 6-4 9-1l14 19" fill="none" stroke="#fff" stroke-width="6" stroke-linecap="round"/><path d="M46 31c7-7 19-5 24 3 5 10 2 22-10 25L56 48z" fill="#fff"/></svg></a>
  <a href="#fcp" class="run" aria-label="Final Cut Pro"><svg viewBox="0 0 96 96"><defs><linearGradient id="fc" x2="1" y2="1"><stop stop-color="#f2d438"/><stop offset=".4" stop-color="#f25546"/><stop offset=".7" stop-color="#c855d8"/><stop offset="1" stop-color="#4b6ff0"/></linearGradient><radialGradient id="fg" cx="0" cy="1" r=".8"><stop stop-color="#9be83c"/><stop offset="1" stop-color="#f6f65a" stop-opacity="0"/></radialGradient><radialGradient id="fh"><stop stop-color="#fff"/><stop offset=".5" stop-color="#fff" stop-opacity="0"/></radialGradient><symbol id="slate" viewBox="0 0 96 96"><path d="M9 44L82 31l7 49-72 11z" fill="#e8e8ec"/><path d="M14 46L80 35l6 42-66 10z" fill="url(#fc)"/><path d="M14 46L80 35l6 42-66 10z" fill="url(#fg)"/><path d="M14 46L80 35l6 42-66 10z" fill="url(#fh)"/><path d="M5 24L76 4l3 11L8 32zM8 32l72-11 2 13-72 10z" fill="#2b2e33"/><path d="M16 21l10-3 10 7-10 3zM38 15l10-3 10 7-10 3zM60 9l10-3 8 6-8 4zM16 42l6-12 10-1-5 11zM38 39l6-12 10-2-5 12zM60 36l6-13 10-1-5 12z" fill="#fff"/></symbol></defs><use href="#slate" width="96" height="96"/></svg></a>
  <a href="#blender" aria-label="Blender"><svg viewBox="0 0 96 96"><path d="M45 14q5-5 10 1l26 24q11 12 8 26-5 19-28 19-20-1-27-17L13 70q-6 4-9-2-2-4 3-8L32 37H19q-5-3-3-8 2-2 5-2h33L44 20z" fill="#dc8233"/><ellipse cx="59" cy="54" rx="19" ry="17" fill="#fff"/><ellipse cx="60" cy="53" rx="12" ry="11" fill="#2f5682"/></svg></a>
  <a href="#minecraft" aria-label="Minecraft"><svg viewBox="0 0 96 96"><defs><pattern id="mg" width="8" height="8" patternUnits="userSpaceOnUse"><path d="M0 0h8v8H0z" fill="#7fae57"/><path d="M0 0h3v2H0zM5 4h3v2H5z" fill="#9ccb71"/><path d="M4 0h3v2H4zM1 5h3v2H1z" fill="#648f42"/></pattern><pattern id="md" width="9" height="12" patternUnits="userSpaceOnUse"><path d="M0 0h9v12H0z" fill="#7a5338"/><path d="M0 0h4v3H0zM5 6h4v3H5z" fill="#a3764f"/><path d="M5 1h3v3H5zM1 7h3v4H1z" fill="#4f3524"/></pattern></defs><path d="M48 0l45 20v56L48 96 3 76V20z" fill="url(#md)"/><path d="M48 41l45-21v56L48 96z" fill="#000" opacity=".3"/><path d="M3 20l45 21 45-21v12l-5 1v6l-6-1v8l-7-3v6l-8 1v-4l-9 10-7-3v3l-8-5v-6l-9 3v-9l-7-2v-6l-8 1z" fill="#3f6b2c"/><path d="M48 0l45 20-45 21L3 20z" fill="url(#mg)"/></svg></a>
  <a href="#chrome" class="run" aria-label="Chrome"><svg viewBox="0 0 96 96"><circle cx="48" cy="48" r="42" fill="#fbce5b"/><path d="M12 27a42 42 0 0 1 73 2H48A19 19 0 0 0 31 57z" fill="#cf5443"/><path d="M12 27a42 42 0 0 0 36 63l17-32H48L31 57z" fill="#459e5f"/><circle cx="48" cy="48" r="19" fill="#f2f2f2"/><circle cx="48" cy="48" r="15" fill="#5285ec"/></svg></a>
  <a href="#notability" class="run" aria-label="Notability"><svg viewBox="0 0 96 96"><circle cx="48" cy="48" r="45" fill="#2c62f0"/><path d="M55 26q3-10 13-8 11 3 9 14-2 6-6 8z" fill="#f4f4f4"/><path d="M49 30l26 14-4 6-26-14z" fill="#d6d7da"/><path d="M45 35l24 13-22 26-26 6 3-22z" fill="#edbd55"/><path d="M20 80l4-22q8 0 10 8 8 2 13 8z" fill="#f6e2c0"/><path d="M19 78l4-8 6 6z" fill="#111"/><path d="M50 21L34 45M76 42L62 64q-6 4-12 0" fill="none" stroke="#dfe6f5" stroke-width="2"/><path d="M62 20l3 2m4-2l3 2m-9 5l3 2m5-3l3 2m-6 4l3 2" stroke="#222" stroke-width="3"/></svg></a>
  <i class="dsep"></i>
  <a href="#skype" class="run" aria-label="Skype"><svg viewBox="0 0 96 96"><defs><linearGradient id="sk" x2="0" y2="1"><stop stop-color="#52b5ea"/><stop offset="1" stop-color="#2a78cb"/></linearGradient></defs><circle cx="33" cy="32" r="22" fill="#3c9fe0"/><circle cx="66" cy="66" r="20" fill="#2b76c8"/><circle cx="48" cy="48" r="37" fill="url(#sk)"/><path d="M60 36c-4-9-24-9-24 2 0 13 25 6 25 19 0 12-22 12-26 2" fill="none" stroke="#fff" stroke-width="7" stroke-linecap="round"/></svg><b class="badge">1</b></a>
  <a href="#slicer" class="run" aria-label="Slicer"><svg viewBox="0 0 96 96"><defs><linearGradient id="wd" x2="1" y2="0"><stop stop-color="#d59a37"/><stop offset=".4" stop-color="#b98738"/><stop offset=".55" stop-color="#24465a"/><stop offset="1" stop-color="#5ba7d6"/></linearGradient><linearGradient id="wf" x2="1" y2="0"><stop stop-color="#d59a37"/><stop offset="1" stop-color="#b07f35"/></linearGradient><symbol id="wood" viewBox="0 0 96 96"><circle cx="49" cy="46" r="37" fill="#a0a1a5"/><path d="M4 43q8 4 14-4 8-2 14-8Q42 18 54 24q8 12 19 17 8 2 17-3 6 4 2 12-12 10-22 25l-26 2Q24 72 4 62z" fill="url(#wd)"/><path d="M4 60q20 2 40 14 16-2 44-20-12 12-18 21-6 5-8 10l-18 4Q24 84 4 72z" fill="url(#wf)"/><path d="M6 44v28M11 44q2 14 2 30M17 40q5 16 5 38M23 37q7 18 8 44M29 33q10 22 10 51M34 30q14 24 13 54M38 26q17 26 18 54M43 24q20 26 22 48M4 66q22 3 40 14 14 0 28-12M4 61q22 2 40 13" fill="none" stroke="#43331a" stroke-width="2"/></symbol></defs><use href="#wood" width="96" height="96"/></svg></a>
  <a href="#ai" class="run" aria-label="Illustrator"><svg viewBox="0 0 96 96"><rect x="3" y="1" width="90" height="88" rx="18" fill="#330303"/><text class="ai" x="48" y="63">Ai</text></svg></a>
  <i class="dsep"></i>
  <a href="#downloads" aria-label="Downloads"><svg viewBox="0 0 96 96"><defs><symbol id="fold" viewBox="0 0 96 96"><path d="M4 16q0-3 3-3h22q3 0 5 4l2 3h53q3 0 3 3v57q0 3-3 3H7q-3 0-3-3z" fill="#9ed9fa"/><path d="M4 24h88v56q0 3-3 3H7q-3 0-3-3z" fill="#7cc7f3"/><path d="M4 76h88M4 80h88" stroke="#6bb5e3"/></symbol></defs><use href="#fold" width="96" height="96"/><circle cx="48" cy="51" r="20" fill="#5ca4cf"/><path d="M43 40h10v11h7L48 65 36 51h7z" fill="#7cc7f3"/></svg></a>
  <a href="#applications" aria-label="Applications"><svg viewBox="0 0 96 96"><use href="#fold" width="96" height="96"/><path d="M53 34L34 63M44 34l20 36M27 59h24M58 59h11M31 67l-2 2" stroke="#5ca4cf" stroke-width="5" stroke-linecap="round"/></svg></a>
  <a href="#w1" aria-label="Finder window"><svg viewBox="0 0 96 96"><path d="M3 22h90v52H3z" fill="#fafafa"/><path d="M3 22h14v52H3z" fill="#e9e9ee"/><path d="M24 33h56M24 48h56M24 62h36" stroke="#2c2735" stroke-width="6" stroke-dasharray="5 7"/><path d="M22 39h62M22 54h62M22 68h30M6 30h7m-7 6h7m-7 6h7m-7 10h7m-7 6h7" stroke="#bbb" stroke-width="2" stroke-dasharray="9 3"/><use href="#finderface" x="62" y="62" width="29" height="28"/></svg></a>
  <a href="#w2" aria-label="Final Cut window"><svg viewBox="0 0 96 96"><path d="M3 22h90v52H3z" fill="#1b1b1c"/><path d="M33 29h35v20H33z" fill="#000"/><path d="M12 38h18v5H12zM12 45h10v4H12z" fill="#2e5074"/><path d="M3 55h90M68 24v30" stroke="#3a3a3a" stroke-width="2"/><path d="M5 25h12M5 30h8" stroke="#666" stroke-width="2"/><use href="#slate" x="56" y="58" width="36" height="36"/></svg></a>
  <a href="#w3" aria-label="Slicer window"><svg viewBox="0 0 96 96"><path d="M3 22h90v52H3z" fill="#32343a"/><path d="M3 22h90v5H3z" fill="#21406f"/><path d="M3 27h10v46H3z" fill="#e6e6ea"/><path d="M64 27h16v26H64z" fill="#202227"/><path d="M27 28h14v6H27zM30 37h12v5H30zM27 45h14v5H27zM30 53h12v5H30zM27 61h14v6H27zM66 44h16v5H66z" fill="#8890cf"/><path d="M44 42l16 7 6 22-14-8z" fill="#1e2024"/><use href="#wood" x="57" y="60" width="38" height="34"/></svg></a>
  <a href="#trash" aria-label="Trash"><svg viewBox="0 0 96 96"><path d="M18 14l8-9 9 3 6-6 9 8 8-7 8 8 8 4 2 4-6 8H24z" fill="#ececec"/><path d="M25 8l5 9M38 6l-4 10M44 10l6 9 8-11M64 8l3 10M71 13l-4 6" stroke="#555" stroke-width="3"/><path d="M36 12l8 3-6 5z" fill="#3f9fc9"/><path d="M14 14q34 16 68 0l-8 70q-26 14-52 0z" fill="#e4e4e5" opacity=".95"/><path d="M14 14q34 16 68 0" fill="none" stroke="#fff" stroke-width="2"/><path d="M28 30q6 20 2 50M50 28q14 24 4 56" stroke="#efefef" stroke-width="6" fill="none"/></svg></a>
</div>
</footer>
</body>
</html>
```
FILE: styles.css
```css
* { box-sizing: border-box; }
html, body { margin: 0; height: 100%; }
body {
  display: flex; flex-direction: column; min-height: 100vh; overflow: hidden;
  font-family: "Open Sans", "Noto Sans", sans-serif; font-size: 20px; color: #d6d6d6;
  background: linear-gradient(90deg, #1b478a 0, #23568f 29%, #2f7fa0 30%, #2f7a9f 68%, #27539a 70%, #26508c 100%);
}
button, input { font: inherit; color: inherit; background: none; border: 0; padding: 0; margin: 0; }
svg { display: block; flex: none; }

.menubar {
  flex: none; height: 44px; display: flex; justify-content: space-between; align-items: center;
  padding: 0 46px 0 41px; color: #021b38; font-family: Inter, sans-serif; font-size: 27px;
  background: linear-gradient(90deg, #aac7ea 0, #adcdec 26%, #acd8ec 34%, #afe0ee 52%, #acd9ee 70%, #abd0ee 82%, #a9c6ec 100%);
}
.menus { display: flex; align-items: center; gap: 36px; font-size: 28px; }
.apple { margin-right: 4px; }
.menus .appname { font-weight: 700; margin-right: 4px; }
.status {
  display: grid; align-items: center; justify-items: center;
  grid-template-columns: 60px 60px 52px 60px 80px 60px 60px 68px 52px 244px 50px 82px 36px;
}
.pct { font-size: 24px; }

.window {
  flex: 1; min-height: 0; margin-top: 6px; display: flex; flex-direction: column;
  background: #3a3a3a; padding: 2px; border-radius: 10px 10px 0 0; overflow: hidden;
}
.titlebar {
  flex: none; height: 66px; display: grid; grid-template-columns: 1fr auto 1fr; align-items: center;
  background: #535353; border-radius: 8px 8px 0 0;
}
.titlebar h1 { margin: 0; padding-right: 72px; font-size: 25px; line-height: 32px; font-weight: 400; }
.tleft, .tright { display: flex; align-items: center; }
.tleft { padding-left: 16px; }
.tright { justify-content: flex-end; padding-right: 8px; }
.light { width: 24px; height: 24px; border-radius: 50%; margin-right: 16px; }
.red { background: radial-gradient(circle, #4a0a08 4px, #ec6a5e 5px); }
.yellow { background: #f5bf4f; }
.green { background: #61c554; }
.home { margin-left: 15px; }
.vsep { width: 4px; height: 40px; background: #5f5f5f; margin: 0 16px 0 21px; }
.arr { padding-bottom: 8px; }
.s1 { margin: 0 28px 0 24px; }
.ess { display: flex; align-items: center; gap: 24px; padding-bottom: 4px; font-size: 24px; font-weight: 700; color: #e6e6e6; }
.s2 { margin: 0 11px 0 28px; }
.search {
  display: flex; align-items: center; gap: 6px; width: 374px; height: 42px; padding-left: 6px;
  background: #464646; border: 2px solid #606060; border-radius: 6px;
}
.search input { width: 300px; font-size: 23px; outline: 0; }
.search input::placeholder { color: #858585; opacity: 1; }

.work { flex: 1; min-height: 0; display: flex; margin-top: 2px; }
.tools { width: 76px; margin-right: 6px; background: #535353; display: flex; flex-direction: column; }
.phead { height: 24px; background: #444; border-bottom: 3px solid #3a3a3a; padding: 6px 0 0 10px; }
.grip { width: 38px; height: 8px; margin: 6px 0 20px 18px; background: repeating-linear-gradient(90deg, #3a3a3a 0 2px, #535353 2px 4px); }
.toollist { display: grid; grid-auto-rows: 48px; padding: 6px 0 0 10px; }
.toollist button { width: 56px; height: 44px; position: relative; border-radius: 5px; }
.toollist svg { width: 56px; height: 48px; margin-top: -2px; }
.toollist .on { background: #303030; }
.more::after { content: ""; position: absolute; right: 2px; bottom: 0; width: 7px; height: 7px; background: linear-gradient(135deg, transparent 50%, #c4c4c4 50%); }
.q text { font: bold 13px "Open Sans", sans-serif; fill: #ddd; }

.docs { flex: 1; min-width: 0; display: flex; flex-direction: column; }
.tabs { height: 58px; display: flex; gap: 2px; background: #3a3a3a; border-bottom: 2px solid #3a3a3a; }
.tabs::after { content: ""; flex: 1; background: #444; }
.tab { display: flex; align-items: center; padding: 0 10px 4px 14px; width: 562px; background: #444; color: #b0b0b0; font-weight: 700; font-size: 21px; white-space: nowrap; overflow: hidden; }
.tab b { font: 400 26px "Open Sans", sans-serif; width: 34px; text-align: left; flex: none; color: #c4c4c4; }
.tab.active { width: 516px; background: #535353; color: #f4f4f4; }
.view { flex: 1; min-height: 0; display: flex; }
.canvas { flex: 1; min-width: 0; position: relative; background: #fff; }
.art { position: absolute; inset: 0; width: 100%; height: 100%; }
.cut { fill: none; stroke: #7485bd; stroke-width: 1; }
.cut path, .sel path { vector-effect: non-scaling-stroke; }
.lbl { font: 300 38px "Roboto Condensed", Roboto, sans-serif; fill: #dc3a2e; stroke: none; text-anchor: middle; }
.lbl path { stroke: #dc3a2e; stroke-width: 2; fill: none; }
.lbl .big { font-size: 64px; font-weight: 100; stroke: #dc3a2e; stroke-width: .6; }
.lbl .mid { font-size: 46px; font-weight: 100; stroke: #dc3a2e; stroke-width: .8; }
.lbl .sm { font-size: 30px; }
.lbl .xs { font-size: 22px; }
.lbl .tiny { font-size: 12px; font-weight: 700; }
.lbl .u { text-decoration: underline; }
.lbl.blue { fill: #4f74e0; }
.lbl.blue path, .lbl.blue .mid { stroke: #4f74e0; }
.sel { fill: none; stroke: #4f80f8; stroke-width: 3; }
.sel .thin { stroke-width: 2; }
.handles { fill: #fff; stroke: #4f80f8; stroke-width: 2; }

.context {
  position: absolute; left: 828px; top: 722px; width: 392px; padding: 8px 0;
  background: #f1f1f1; border-radius: 10px; color: #3b3b3b;
  font-family: Inter, sans-serif; font-size: 27px;
  box-shadow: 0 0 0 1px #bdbdbd, 0 10px 36px rgba(0, 0, 0, .3);
}
.context button { display: flex; align-items: center; justify-content: space-between; width: 100%; height: 38px; padding: 0 24px 2px 42px; text-align: left; }
.context button:disabled { color: #b7b7b7; }
.context .hl { background: #a671ab; color: #fff; }
.context hr { height: 4px; margin: 10px 0; border: 0; background: #e0e0e0; }
.sub::after { content: ""; border: solid transparent; border-width: 10px 0 10px 18px; border-left-color: currentColor; }

.vscroll { width: 32px; background: #484848; display: flex; flex-direction: column; align-items: center; justify-content: space-between; padding: 12px 0; }
.vscroll i { width: 30px; height: 50px; border-radius: 14px; background: #616161; margin-top: -52px; }
.statusbar { height: 32px; display: flex; align-items: center; background: #515151; padding-left: 8px; }
.zoomval, .page { height: 30px; background: #444; border: 2px solid #5c5c5c; border-bottom: 0; font-size: 21px; color: #eee; padding: 4px 0 0 5px; border-radius: 5px 0 0 0; }
.zoomval { width: 100px; }
.page { width: 80px; }
.dd { width: 36px; height: 30px; padding-top: 4px; background: #444; display: grid; place-items: center; border: 2px solid #5c5c5c; border-width: 2px 2px 0 0; }
.cur { flex: none; width: 400px; height: 30px; line-height: 36px; text-align: center; border: solid #474747; border-width: 0 2px; font-size: 21px; color: #ccc; }
.play { width: 35px; display: grid; place-items: center; }
.hscroll { flex: 1; height: 32px; background: #484848; display: flex; align-items: center; justify-content: space-between; padding: 0 14px; }
.hscroll i { width: 50px; height: 30px; border-radius: 14px; background: #616161; margin-right: 58px; }
.corner { width: 32px; }

.panel { width: 500px; margin-left: 6px; background: #535353; display: flex; flex-direction: column; }
.phead.right { display: flex; justify-content: flex-end; padding-right: 12px; }
.ptabs { height: 54px; display: flex; align-items: center; background: #444; border-bottom: 2px solid #3a3a3a; padding-right: 12px; font-weight: 700; font-size: 20px; color: #b4b4b4; }
.ptabs button { height: 54px; border-right: 2px solid #3a3a3a; padding: 0 18px 4px 18px; }
.ptabs .active { background: #535353; color: #fff; }
.ptabs span { flex: 1; }
.pbody { flex: 1; display: flex; flex-direction: column; padding: 12px 9px 0 11px; }
.layers { flex: 1; border: 2px solid #5e5e5e; border-radius: 6px; }
.layer { height: 40px; display: flex; align-items: center; background: #566579; color: #f0f0f0; font-size: 21px; }
.eye { margin: 0 10px 0 6px; }
.lockcell { width: 44px; height: 40px; border: solid #4a5566; border-width: 0 2px; }
.bar { width: 6px; height: 36px; background: #4f80f8; }
.tw { margin: 0 26px 0 16px; }
.lname { flex: 1; padding-left: 10px; }
.pfoot { height: 40px; display: flex; align-items: center; gap: 25px; padding-right: 45px; font-size: 21px; }
.pfoot span { flex: 1; }

.desk {
  flex: none; display: flex; justify-content: center; padding-top: 6px; height: 134px;
  background:
    linear-gradient(90deg, transparent 8%, #1d2f7a 8% 10%, transparent 10% 29%, #00104f 29% 30%, transparent 30% 42%, #000c58 42% 43%, transparent 43% 56%, #000c58 56% 58%, transparent 58% 59%, #000c58 59% 60%, transparent 60% 70%, #000c58 70% 71%, transparent 71% 83%, #000c58 83% 84%, transparent 84% 87%, #000c58 87% 88%, transparent 88%) 0 0 / 100% 6px no-repeat,
    linear-gradient(90deg, transparent 70px, #a51c56 78px 92px, transparent 94px),
    radial-gradient(circle at 10px 90px, #e6dde8 0 26px, transparent 56px),
    radial-gradient(circle at 50px 110px, #ded3e0 0 20px, transparent 46px),
    linear-gradient(90deg, #68608f 0, #8e83a5 3%, #8d7b98 50%, #a9a6b4 97%, #a3a3b4 100%);
}
.dock {
  display: flex; height: 128px; padding: 0 8px; border-radius: 10px 10px 0 0;
  background:
    radial-gradient(ellipse at 31% 100%, #f6b6e0 0, transparent 14%),
    radial-gradient(ellipse at 15% 90%, #edcfe2 0, transparent 14%),
    radial-gradient(ellipse at 53% 100%, #eccbe4 0, transparent 12%),
    linear-gradient(90deg, #c29ed0 0, #b3acd8 4%, #d3bfd7 10%, #c5b1d6 18%, #cfb0d8 25%, #dfaed6 33%, #bfb2da 43%, #d7c1da 50%, #cbbdd9 58%, #c0c2dc 65%, #c2c6e0 70%, #d4cddd 76%, #c9c5dc 84%, #c0bfdd 90%, #d1cfdd 100%);
}
.dock a { position: relative; width: 104px; padding: 12px 4px 0; text-decoration: none; }
.dock a svg { width: 96px; height: 96px; filter: drop-shadow(0 2px 1px rgba(0, 0, 0, .25)); }
.run::after { content: ""; position: absolute; left: 48px; bottom: 4px; width: 8px; height: 8px; border-radius: 50%; background: #4f4668; }
.dsep { width: 48px; height: 96px; margin-top: 16px; background: linear-gradient(#8f86a0, #8f86a0) 50% 0 / 2px 100% no-repeat; }
.badge { position: absolute; right: 4px; top: 12px; width: 36px; height: 36px; border-radius: 50%; background: #e8554c; color: #fff; font: 400 22px/36px Inter, sans-serif; text-align: center; }
.oct { font: 400 16px Inter, sans-serif; fill: #fff; text-anchor: middle; }
.day { font: 300 40px Inter, sans-serif; fill: #222; text-anchor: middle; }
.ai { font: 700 52px "Open Sans", sans-serif; fill: #f79a33; text-anchor: middle; }
```
